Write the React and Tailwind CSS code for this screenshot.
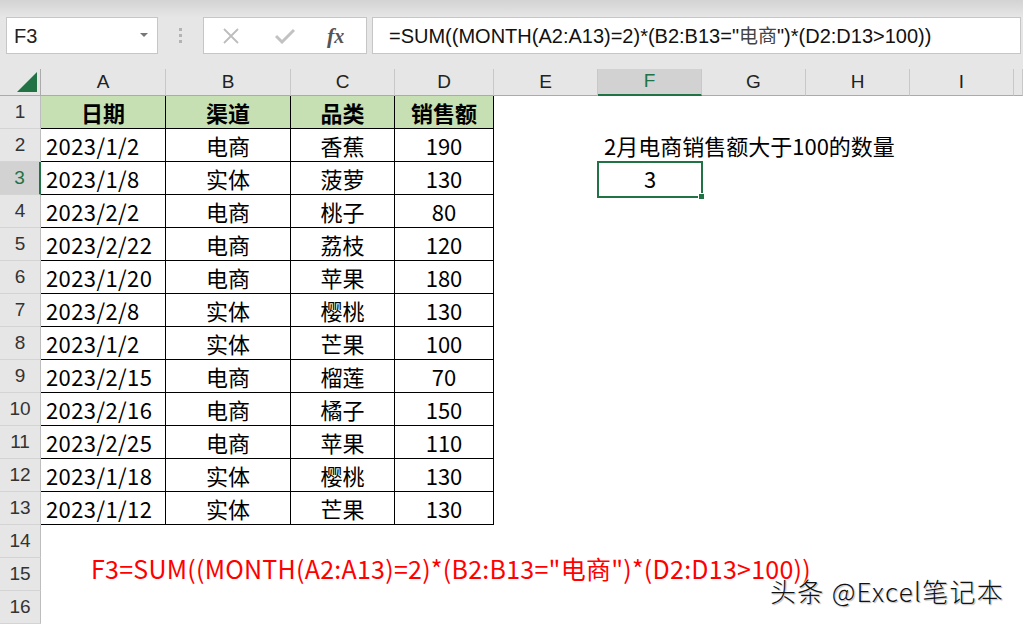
import React from "react";

const data = [
  ["2023/1/2", "电商", "香蕉", 190],
  ["2023/1/8", "实体", "菠萝", 130],
  ["2023/2/2", "电商", "桃子", 80],
  ["2023/2/22", "电商", "荔枝", 120],
  ["2023/1/20", "电商", "苹果", 180],
  ["2023/2/8", "实体", "樱桃", 130],
  ["2023/1/2", "实体", "芒果", 100],
  ["2023/2/15", "电商", "榴莲", 70],
  ["2023/2/16", "电商", "橘子", 150],
  ["2023/2/25", "电商", "苹果", 110],
  ["2023/1/18", "实体", "樱桃", 130],
  ["2023/1/12", "实体", "芒果", 130],
];

const cols = ["A", "B", "C", "D", "E", "F", "G", "H", "I", ""];
const cjk = { fontFamily: '"Noto Sans CJK SC", "Noto Sans", sans-serif' };

function RowHead({ n, selected }) {
  return (
    <div
      className={
        "flex items-center justify-center text-[19px] border-b border-[#d4d4d4] " +
        (selected
          ? "bg-[#d2d2d2] text-[#217346] border-r-2 border-r-[#217346]"
          : "bg-[#e6e6e6] text-[#333] border-r border-r-[#bdbdbd]")
      }
      style={{ fontFamily: '"Liberation Sans", Arial, sans-serif' }}
    >
      {n}
    </div>
  );
}

function TCell({ children, align = "center", bold, header }) {
  return (
    <div
      className={
        "flex items-center border-r border-b border-black text-[22px] text-black whitespace-nowrap " +
        (align === "left" ? "justify-start pl-[5px] tracking-[0.4px] " : "justify-center ") +
        (bold ? "font-bold " : "") +
        (header ? "bg-[#c6e0b4]" : "bg-white")
      }
      style={cjk}
    >
      {children}
    </div>
  );
}

function Empty() {
  return <div />;
}

export default function App() {
  const rows = [];
  rows.push(
    <React.Fragment key="r1">
      <RowHead n={1} />
      <TCell bold header>日期</TCell>
      <TCell bold header>渠道</TCell>
      <TCell bold header>品类</TCell>
      <TCell bold header>销售额</TCell>
      {Array.from({ length: 6 }).map((_, i) => (
        <Empty key={i} />
      ))}
    </React.Fragment>
  );
  data.forEach((d, idx) => {
    const r = idx + 2;
    rows.push(
      <React.Fragment key={"r" + r}>
        <RowHead n={r} selected={r === 3} />
        <TCell align="left">{d[0]}</TCell>
        <TCell>{d[1]}</TCell>
        <TCell>{d[2]}</TCell>
        <TCell>{d[3]}</TCell>
        <Empty />
        {r === 2 ? (
          <div
            className="flex items-center pl-[6px] text-[22px] text-black whitespace-nowrap overflow-visible"
            style={cjk}
          >
            2月电商销售额大于100的数量
          </div>
        ) : r === 3 ? (
          <div className="relative flex items-center justify-center text-[22px] text-black" style={cjk}>
            3
            <div className="absolute left-[-1px] top-[-1px] right-[-1px] bottom-[-3px] border-2 border-[#217346]" />
            <div className="absolute right-[-3px] bottom-[-5px] w-[7px] h-[7px] bg-[#217346] border border-white" />
          </div>
        ) : (
          <Empty />
        )}
        <Empty />
        <Empty />
        <Empty />
        <Empty />
      </React.Fragment>
    );
  });
  rows.push(
    <React.Fragment key="r14">
      <RowHead n={14} />
      <div className="col-span-10" />
    </React.Fragment>
  );
  rows.push(
    <React.Fragment key="r15">
      <RowHead n={15} />
      <div
        className="col-span-10 flex items-center pl-[50px] pb-[13px] text-[25px] tracking-[0.25px] leading-[30px] text-[#ff0000] whitespace-nowrap overflow-visible"
        style={cjk}
      >
        F3=SUM((MONTH(A2:A13)=2)*(B2:B13="电商")*(D2:D13&gt;100))
      </div>
    </React.Fragment>
  );
  rows.push(
    <React.Fragment key="r16">
      <RowHead n={16} />
      <div className="col-span-10" />
    </React.Fragment>
  );

  return (
    <div
      className="relative w-[1023px] h-[624px] overflow-hidden bg-[#e6e6e6]"
      style={{ fontFamily: '"Liberation Sans", Arial, sans-serif' }}
    >
      <div className="h-[17px] bg-gradient-to-b from-[#d3d3d3] to-[#e6e6e6]" />
      <div className="flex h-[37px] pl-[6px]">
        <div className="w-[152px] bg-white border border-[#c6c6c6] flex items-center justify-between pl-[7px] pr-[9px]">
          <span className="text-[20px] text-[#222]">F3</span>
          <svg width="8" height="5" viewBox="0 0 8 5">
            <polygon points="0,0 8,0 4,4" fill="#777" />
          </svg>
        </div>
        <div className="w-[45px] flex flex-col items-center justify-center gap-[3px]">
          <div className="w-[3px] h-[3px] bg-[#b3b3b3]" />
          <div className="w-[3px] h-[3px] bg-[#b3b3b3]" />
          <div className="w-[3px] h-[3px] bg-[#b3b3b3]" />
        </div>
        <div className="w-[164px] bg-white border border-[#c6c6c6] flex items-center pl-[18px]">
          <svg width="18" height="18" viewBox="0 0 18 18">
            <path d="M2 2 L16 16 M16 2 L2 16" stroke="#bdbdbd" strokeWidth="1.8" />
          </svg>
          <svg className="ml-[35px]" width="20" height="16" viewBox="0 0 20 16">
            <path d="M1 8 L7 14 L19 2" stroke="#c2c2c2" strokeWidth="3" fill="none" />
          </svg>
          <span
            className="ml-[32px] text-[22px] italic font-bold text-[#555] leading-none"
            style={{ fontFamily: '"Liberation Serif", "Times New Roman", serif' }}
          >
            f<span className="text-[20px]">x</span>
          </span>
        </div>
        <div className="ml-[5px] flex-1 mr-[2px] bg-white border border-[#c6c6c6] flex items-center pl-[16px] text-[20px] text-[#111] whitespace-nowrap">
          =SUM((MONTH(A2:A13)=2)*(B2:B13="
          <span className="text-[#444] text-[19px]" style={cjk}>电商</span>
          ")*(D2:D13&gt;100))
        </div>
      </div>
      <div className="h-[15px]" />
      <div className="grid grid-cols-[41px_125px_125px_104px_99px_104px_104px_104px_104px_104px_9px] grid-rows-[27px_repeat(16,33px)] bg-white">
        <div className="bg-[#e6e6e6] border-r border-b border-[#ababab] flex items-end justify-end pr-[3px] pb-[3px]">
          <svg width="20" height="20" viewBox="0 0 20 20">
            <polygon points="20,0 20,20 0,20" fill="#217346" />
          </svg>
        </div>
        {cols.map((c, i) =>
          c === "F" ? (
            <div
              key={i}
              className="bg-[#d2d2d2] border-r border-[#c8c8c8] border-b-2 border-b-[#217346] flex items-center justify-center text-[19px] text-[#217346]"
            >
              {c}
            </div>
          ) : (
            <div
              key={i}
              className="bg-[#e6e6e6] border-r border-[#c8c8c8] border-b border-b-[#ababab] flex items-center justify-center text-[19px] text-[#222]"
            >
              {c}
            </div>
          )
        )}
        {rows}
      </div>
      <div
        className="absolute left-[770px] top-[571px] text-[26px] tracking-[1.3px] font-light text-[#111] whitespace-nowrap [text-shadow:0_0_2px_#fff,0_0_2px_#fff,1px_1px_1px_#999]"
        style={cjk}
      >
        头条 @Excel笔记本
      </div>
    </div>
  );
}
